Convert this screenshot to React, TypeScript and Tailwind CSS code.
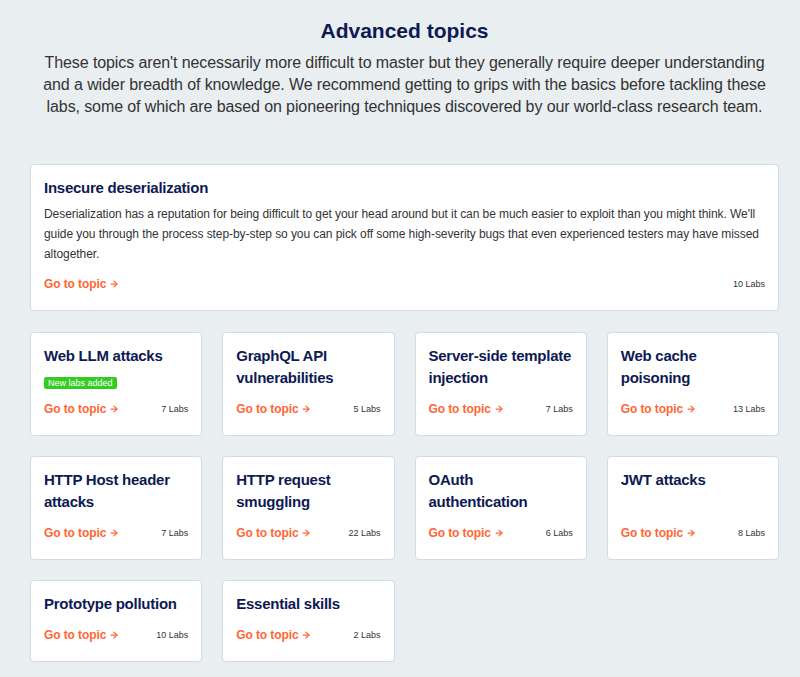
import { ArrowRight } from 'lucide-react';

interface Topic {
  title: string;
  labs: number;
  isNew?: boolean;
}

const topics: Topic[] = [
  { title: 'Web LLM attacks', labs: 7, isNew: true },
  { title: 'GraphQL API vulnerabilities', labs: 5 },
  { title: 'Server-side template injection', labs: 7 },
  { title: 'Web cache poisoning', labs: 13 },
  { title: 'HTTP Host header attacks', labs: 7 },
  { title: 'HTTP request smuggling', labs: 22 },
  { title: 'OAuth authentication', labs: 6 },
  { title: 'JWT attacks', labs: 8 },
  { title: 'Prototype pollution', labs: 10 },
  { title: 'Essential skills', labs: 2 },
];

function TopicLink() {
  return (
    <a href="#" className="inline-flex items-center gap-[3px] text-[12px] leading-4 font-bold tracking-[-0.1px] text-[#ff6633]">
      Go to topic
      <ArrowRight className="w-[10px] h-[10px]" strokeWidth={3} />
    </a>
  );
}

function TopicCard({ topic }: { topic: Topic }) {
  return (
    <div className="bg-white border border-[#d5dadf] rounded-[4px] px-[13px] pt-[12px] pb-[18px] flex flex-col">
      <h3 className="text-[15px] leading-[22px] font-bold tracking-[-0.25px] text-[#0d1a53]">{topic.title}</h3>
      {topic.isNew && (
        <span className="mt-[10px] w-fit bg-[#33cc22] text-white text-[9px] leading-[12px] px-[4px] rounded-[2px]">
          New labs added
        </span>
      )}
      <div className="flex-1" />
      <div className="flex items-center justify-between mt-[12px] leading-4">
        <TopicLink />
        <span className="text-[9px] text-[#333]">{topic.labs} Labs</span>
      </div>
    </div>
  );
}

export default function App() {
  return (
    <div className="min-h-screen bg-[#e9eef1] pl-[30px] pr-[21px] pt-[18px] pb-[20px] font-['Liberation_Sans',Arial,sans-serif]">
      <div className="text-center">
        <h2 className="text-[21px] leading-[26px] font-bold text-[#0d1a53]">Advanced topics</h2>
        <p className="mt-[8px] mx-auto max-w-[728px] text-[16px] leading-[22px] tracking-[-0.1px] text-[#333]">
          These topics aren't necessarily more difficult to master but they generally require deeper understanding
          and a wider breadth of knowledge. We recommend getting to grips with the basics before tackling these
          labs, some of which are based on pioneering techniques discovered by our world-class research team.
        </p>
      </div>

      {/* Featured topic */}
      <div className="mt-[46px] bg-white border border-[#d5dadf] rounded-[4px] px-[13px] pt-[12px] pb-[18px]">
        <h3 className="text-[15px] leading-[22px] font-bold tracking-[-0.25px] text-[#0d1a53]">Insecure deserialization</h3>
        <p className="mt-[5px] text-[12px] leading-[20px] tracking-[-0.07px] text-[#333]">
          Deserialization has a reputation for being difficult to get your head around but it can be much easier to
          exploit than you might think. We'll guide you through the process step-by-step so you can pick off some
          high-severity bugs that even experienced testers may have missed altogether.
        </p>
        <div className="flex items-center justify-between mt-[12px] leading-4">
          <TopicLink />
          <span className="text-[9px] text-[#333]">10 Labs</span>
        </div>
      </div>

      <div className="mt-[21px] grid grid-cols-4 gap-x-5 gap-y-5">
        {topics.map((t) => (
          <TopicCard key={t.title} topic={t} />
        ))}
      </div>
    </div>
  );
}
